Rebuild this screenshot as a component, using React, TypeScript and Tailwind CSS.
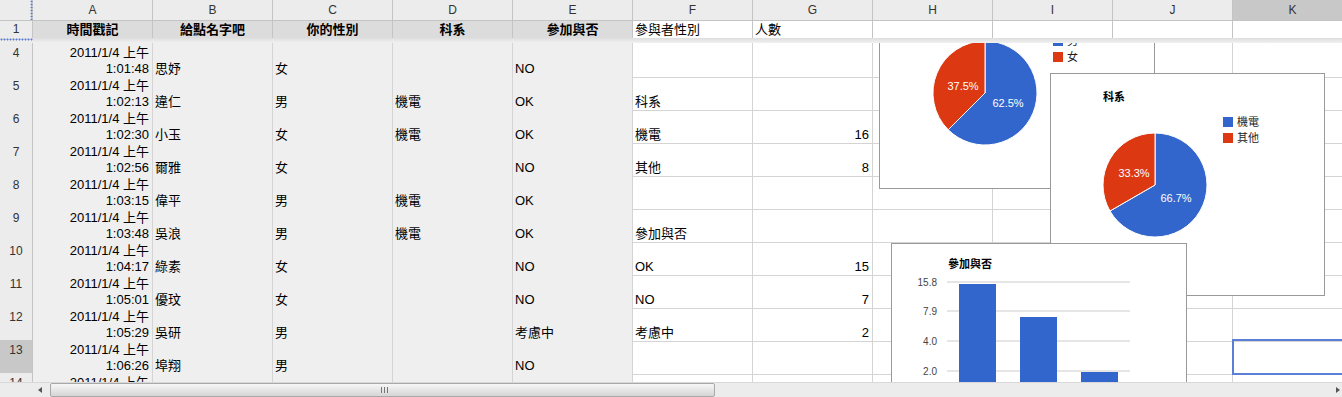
import React from 'react';

type Row = { n: number; t: string; name: string; sex: string; dept: string; go: string; f: string; g: string };

const cols = ['A', 'B', 'C', 'D', 'E', 'F', 'G', 'H', 'I', 'J', 'K'];

const rows: Row[] = [
  { n: 4, t: '1:01:48', name: '思妤', sex: '女', dept: '', go: 'NO', f: '', g: '' },
  { n: 5, t: '1:02:13', name: '違仁', sex: '男', dept: '機電', go: 'OK', f: '科系', g: '' },
  { n: 6, t: '1:02:30', name: '小玉', sex: '女', dept: '機電', go: 'OK', f: '機電', g: '16' },
  { n: 7, t: '1:02:56', name: '爾雅', sex: '女', dept: '', go: 'NO', f: '其他', g: '8' },
  { n: 8, t: '1:03:15', name: '偉平', sex: '男', dept: '機電', go: 'OK', f: '', g: '' },
  { n: 9, t: '1:03:48', name: '吳浪', sex: '男', dept: '機電', go: 'OK', f: '參加與否', g: '' },
  { n: 10, t: '1:04:17', name: '綠素', sex: '女', dept: '', go: 'NO', f: 'OK', g: '15' },
  { n: 11, t: '1:05:01', name: '優玟', sex: '女', dept: '', go: 'NO', f: 'NO', g: '7' },
  { n: 12, t: '1:05:29', name: '吳研', sex: '男', dept: '', go: '考慮中', f: '考慮中', g: '2' },
  { n: 13, t: '1:06:26', name: '埠翔', sex: '男', dept: '', go: 'NO', f: '', g: '' },
  { n: 14, t: '1:07:02', name: '怡君', sex: '女', dept: '機電', go: 'OK', f: '', g: '' },
];

const header = ['時間戳記', '給點名字吧', '你的性別', '科系', '參加與否'];

// pie slice, angles clockwise from 12 o'clock
function slice(cx: number, cy: number, r: number, a0: number, a1: number) {
  const rad = (d: number) => (d * Math.PI) / 180;
  const x0 = cx + r * Math.sin(rad(a0));
  const y0 = cy - r * Math.cos(rad(a0));
  const x1 = cx + r * Math.sin(rad(a1));
  const y1 = cy - r * Math.cos(rad(a1));
  const large = a1 - a0 > 180 ? 1 : 0;
  return `M${cx} ${cy} L${x0} ${y0} A${r} ${r} 0 ${large} 1 ${x1} ${y1} Z`;
}

function Pie({ cx, cy, split, blueLabel, redLabel }: { cx: number; cy: number; split: number; blueLabel: [number, number, string]; redLabel: [number, number, string] }) {
  return (
    <g>
      <path d={slice(cx, cy, 52, 0, split)} fill="#3366cc" stroke="#fff" strokeWidth={1} />
      <path d={slice(cx, cy, 52, split, 360)} fill="#dc3912" stroke="#fff" strokeWidth={1} />
      <text x={redLabel[0]} y={redLabel[1]} fill="#fff" fontSize={11} textAnchor="middle" dominantBaseline="central">{redLabel[2]}</text>
      <text x={blueLabel[0]} y={blueLabel[1]} fill="#fff" fontSize={11} textAnchor="middle" dominantBaseline="central">{blueLabel[2]}</text>
    </g>
  );
}

function Legend({ x, y, items }: { x: number; y: number; items: [string, string][] }) {
  return (
    <g>
      {items.map(([c, t], i) => (
        <g key={t}>
          <rect x={x} y={y + i * 16} width={10} height={10} fill={c} />
          <text x={x + 14} y={y + i * 16 + 5} fontSize={11} fill="#222" dominantBaseline="central">{t}</text>
        </g>
      ))}
    </g>
  );
}

function Cell({ children, className }: { children?: React.ReactNode; className: string }) {
  return <div className={className}>{children}</div>;
}

export default function App() {
  return (
    <div className="w-[1342px] h-[397px] overflow-hidden bg-white relative font-['Liberation_Sans','Noto_Sans_CJK_TC',sans-serif] text-black">
      {/* column letters */}
      <div className="grid grid-cols-[33px_repeat(11,120px)] h-[21px]">
        <div className="relative bg-[#ececec] border-r border-b border-[#c4c4c4]">
          <div className="absolute right-[-1px] top-0 bottom-0 w-[3px] bg-[radial-gradient(#5b7fd6_0.9px,transparent_1.1px)] bg-[length:3px_3px]" />
        </div>
        {cols.map((c) => (
          <div
            key={c}
            className={`border-r border-b border-[#c4c4c4] text-center text-[12px] leading-[20px] text-[#333] ${c === 'K' ? 'bg-[#c8c8c8]' : 'bg-[#ececec]'}`}
          >
            {c}
          </div>
        ))}
      </div>

      {/* row 1 */}
      <div className="grid grid-cols-[33px_repeat(11,120px)] h-[17px]">
        <div className="bg-[#ececec] border-r border-b border-[#c4c4c4] text-center text-[12px] leading-[14px] pt-[1px] text-[#333]">1</div>
        {header.map((h) => (
          <div key={h} className="bg-[#dcdcdc] border-r border-b border-[#c4c4c4] text-center text-[13px] font-bold leading-[18px] whitespace-nowrap">
            {h}
          </div>
        ))}
        <div className="border-r border-b border-[#c4c4c4] pl-[2px] text-[13px] leading-[18px] whitespace-nowrap">參與者性別</div>
        <div className="border-r border-b border-[#c4c4c4] pl-[2px] text-[13px] leading-[18px] whitespace-nowrap">人數</div>
        {cols.slice(7).map((c) => (
          <div key={c} className="border-r border-b border-[#c4c4c4]" />
        ))}
      </div>

      {/* frozen divider */}
      <div className="relative h-[5px] bg-[linear-gradient(#dedede,#f0f0f0)]">
        <div className="absolute left-0 top-0 w-[33px] h-[3px] bg-[radial-gradient(#5b7fd6_0.9px,transparent_1.1px)] bg-[length:3px_3px]" />
      </div>

      {/* scrolled area */}
      <div className="relative h-[339px] overflow-hidden">
        {rows.map((r) => (
          <div key={r.n} className="grid grid-cols-[33px_repeat(11,120px)] h-[33px] text-[13px]">
            <div className={`border-r border-b border-[#c4c4c4] text-center text-[12px] leading-[14px] pt-[3px] text-[#333] ${r.n === 13 ? 'bg-[#c8c8c8]' : 'bg-[#ececec]'}`}>
              {r.n}
            </div>
            <Cell className="bg-[#efefef] border-r border-b border-[#d4d4d4] text-right pr-[3px] pt-[2px] whitespace-nowrap">
              <div className="h-[16px] leading-[16px]">2011/1/4 上午</div>
              <div className="h-[16px] leading-[16px]">{r.t}</div>
            </Cell>
            {[r.name, r.sex, r.dept, r.go].map((v, i) => (
              <Cell key={i} className="bg-[#efefef] border-r border-b border-[#d4d4d4] pl-[2px] pt-[18px] whitespace-nowrap">
                <div className="h-[16px] leading-[16px]">{v}</div>
              </Cell>
            ))}
            <Cell className="border-r border-b border-[#d4d4d4] pl-[2px] pt-[18px] whitespace-nowrap">
              <div className="h-[16px] leading-[16px]">{r.f}</div>
            </Cell>
            <Cell className="border-r border-b border-[#d4d4d4] pr-[3px] pt-[18px] text-right whitespace-nowrap">
              <div className="h-[16px] leading-[16px]">{r.g}</div>
            </Cell>
            <Cell className="border-r border-b border-[#d4d4d4]" />
            <Cell className="border-r border-b border-[#d4d4d4]" />
            <Cell className="border-r border-b border-[#d4d4d4]" />
            <div className="relative border-r border-b border-[#d4d4d4]">
              {r.n === 13 && <div className="absolute top-[-1px] left-[-1px] right-[-1px] bottom-[-1px] border-2 border-[#5b7fd6]" />}
            </div>
          </div>
        ))}

        {/* chart: 參與者性別 */}
        <div className="absolute left-[879px] top-[-43px] w-[276px] h-[189px] bg-white border border-[#999]">
          <svg width={274} height={187}>
            <text x={53} y={23} fontSize={11} fontWeight="bold" dominantBaseline="central">參與者性別</text>
            <Pie cx={105} cy={92} split={225} redLabel={[83, 85, '37.5%']} blueLabel={[128, 102, '62.5%']} />
            <Legend x={173} y={35} items={[['#3366cc', '男'], ['#dc3912', '女']]} />
          </svg>
        </div>

        {/* chart: 科系 */}
        <div className="absolute left-[1050px] top-[30px] w-[275px] h-[223px] bg-white border border-[#999]">
          <svg width={273} height={221}>
            <text x={52} y={23} fontSize={11} fontWeight="bold" dominantBaseline="central">科系</text>
            <Legend x={172} y={43} items={[['#3366cc', '機電'], ['#dc3912', '其他']]} />
            <Pie cx={104} cy={111} split={240} redLabel={[83, 99, '33.3%']} blueLabel={[125, 124, '66.7%']} />
          </svg>
        </div>

        {/* chart: 參加與否 */}
        <div className="absolute left-[891px] top-[200px] w-[296px] h-[220px] bg-white border border-[#999]">
          <svg width={294} height={218}>
            <text x={56} y={20} fontSize={11} fontWeight="bold" dominantBaseline="central">參加與否</text>
            {[
              [38, '15.8'],
              [67, '7.9'],
              [97, '4.0'],
              [127, '2.0'],
            ].map(([y, t]) => (
              <g key={t as string}>
                <line x1={55} x2={238} y1={y as number} y2={y as number} stroke="#cccccc" strokeWidth={1} />
                <text x={45} y={y as number} fontSize={10} fill="#444" textAnchor="end" dominantBaseline="central">{t}</text>
              </g>
            ))}
            <rect x={67} y={40} width={37} height={200} fill="#3366cc" />
            <rect x={128} y={73} width={37} height={200} fill="#3366cc" />
            <rect x={189} y={128} width={37} height={200} fill="#3366cc" />
          </svg>
        </div>
      </div>

      {/* horizontal scrollbar */}
      <div className="flex items-stretch h-[15px] bg-[#ececec] border-t border-[#d8d8d8]">
        <div className="w-[38px]" />
        <div className="w-[12px] flex items-center">
          <div className="w-0 h-0 border-y-[3px] border-y-transparent border-r-[4px] border-r-[#555]" />
        </div>
        <div className="w-[665px] flex items-center justify-end pr-[326px] border border-[#a9a9a9] rounded-[2px] bg-[linear-gradient(#f7f7f7,#d5d5d5)]">
          <div className="flex gap-[2px] h-[6px]">
            <div className="w-px bg-[#777]" />
            <div className="w-px bg-[#777]" />
            <div className="w-px bg-[#777]" />
          </div>
        </div>
        <div className="flex-1 flex items-center justify-end pr-[2px]">
          <div className="w-0 h-0 border-y-[3px] border-y-transparent border-l-[4px] border-l-[#555]" />
        </div>
      </div>
    </div>
  );
}
